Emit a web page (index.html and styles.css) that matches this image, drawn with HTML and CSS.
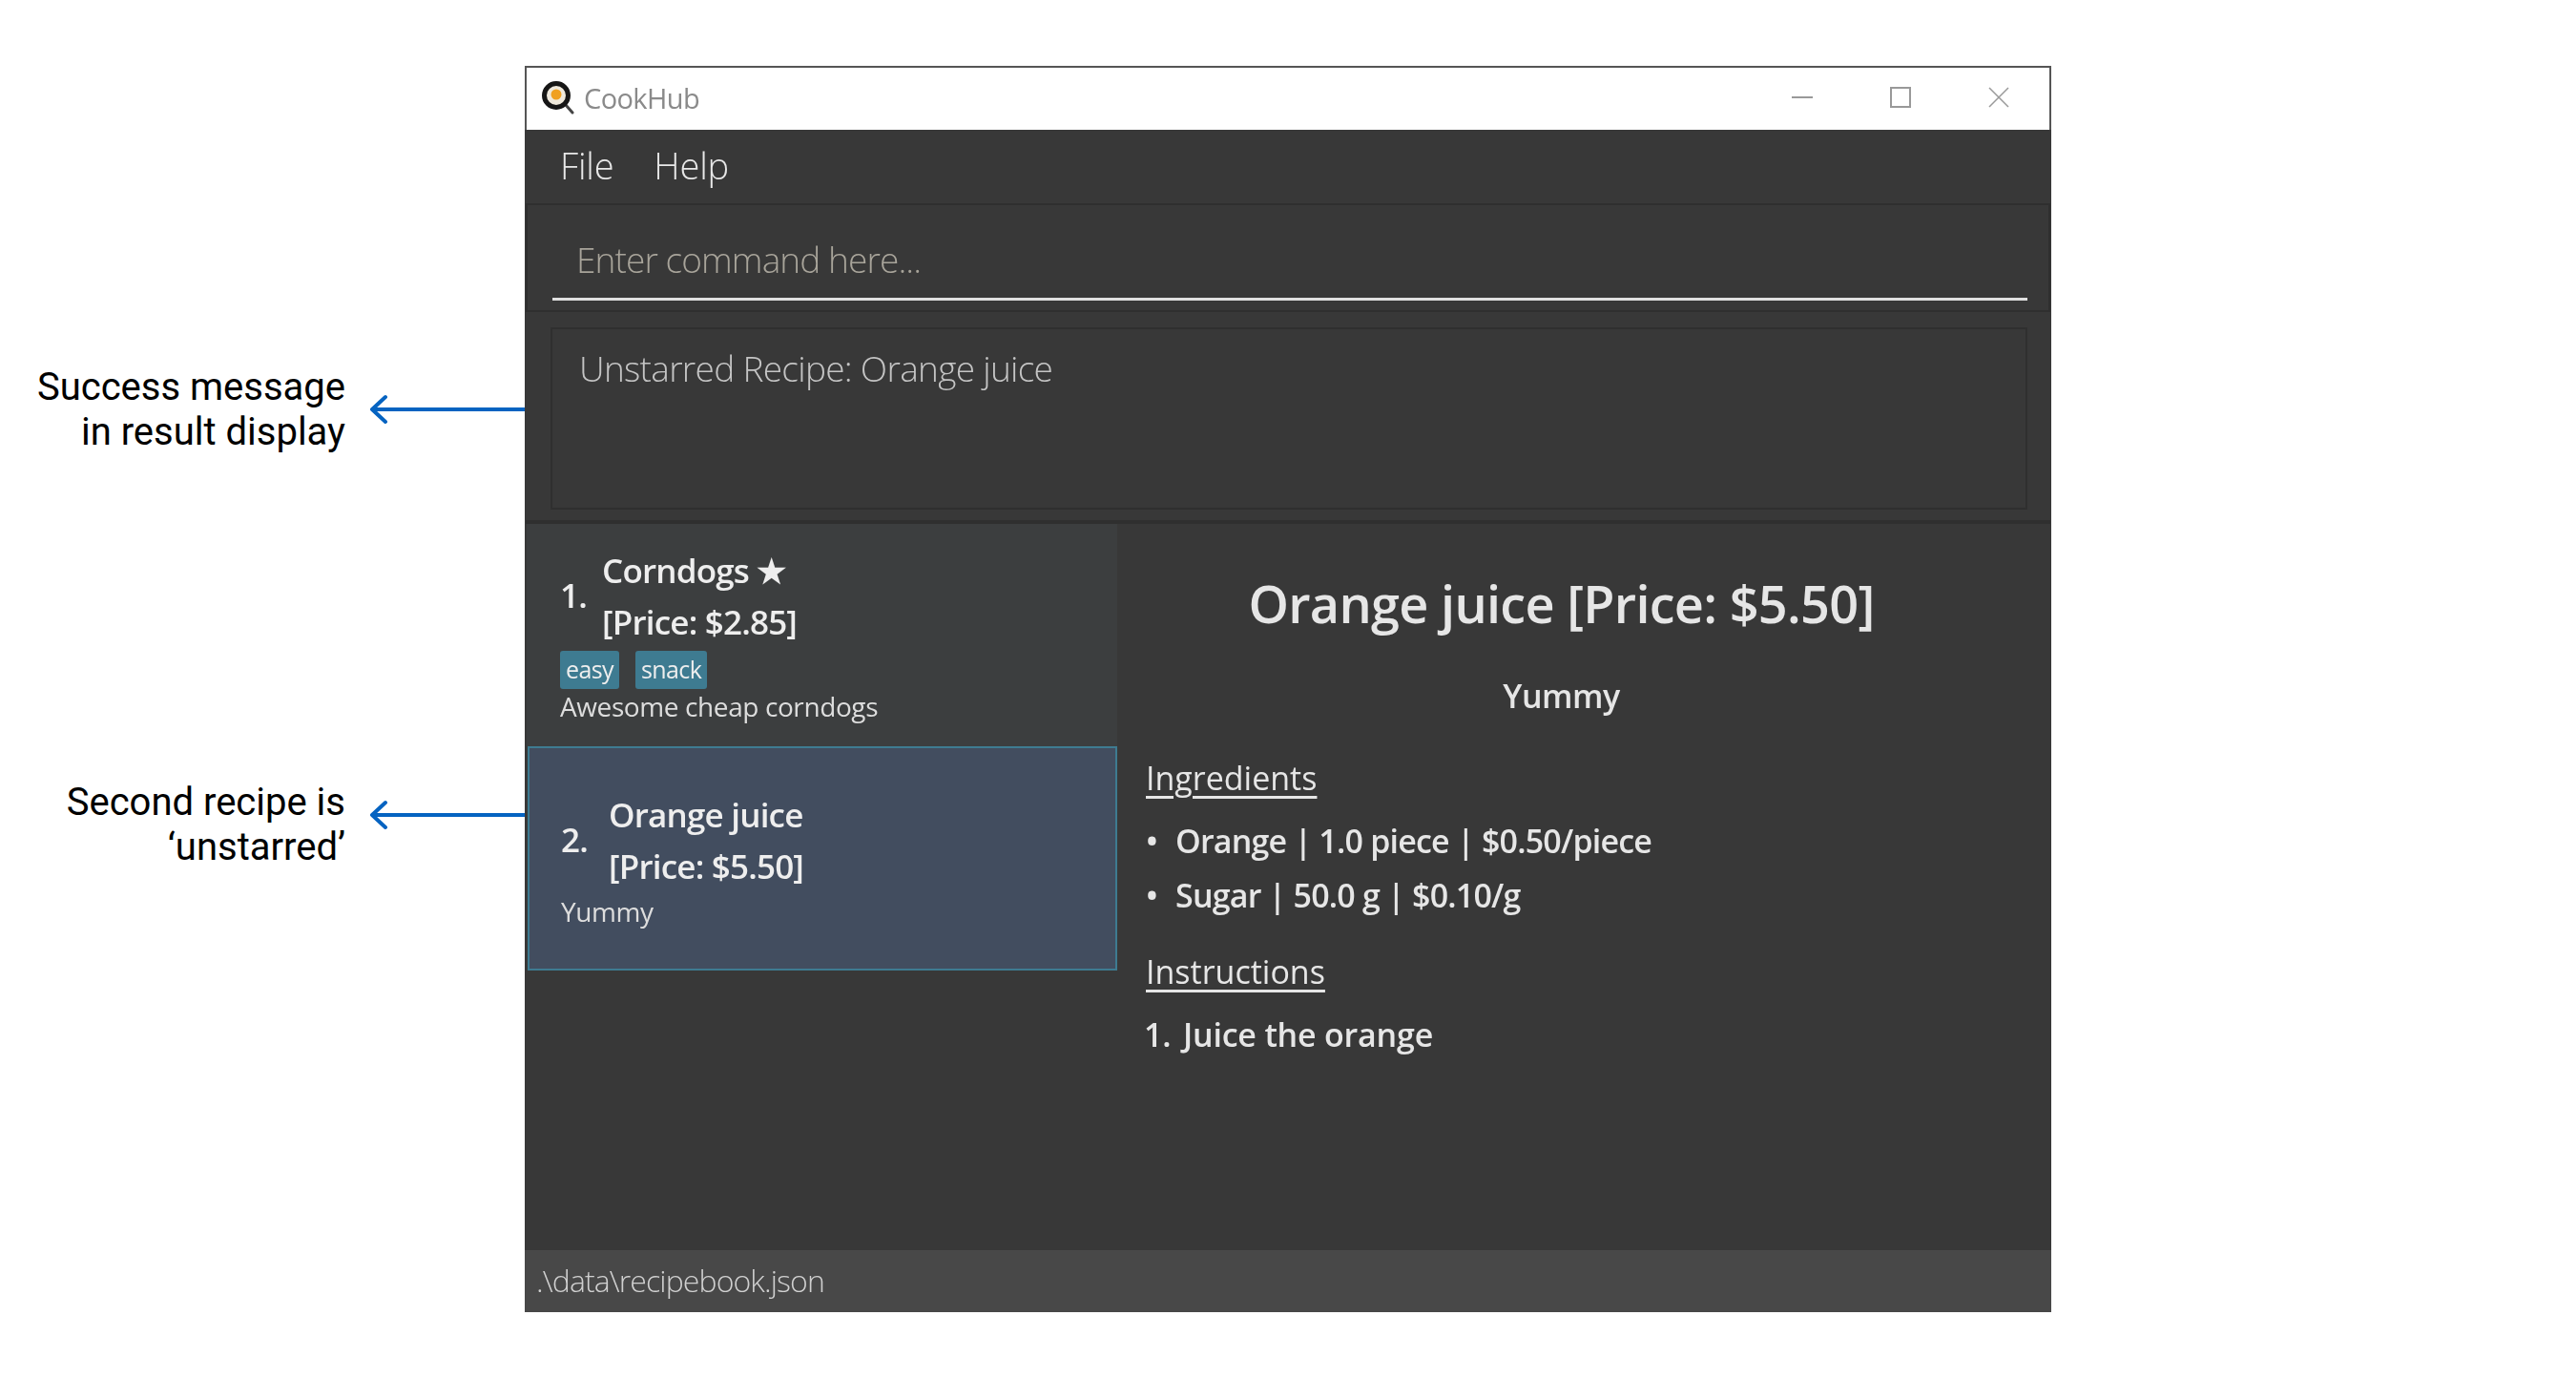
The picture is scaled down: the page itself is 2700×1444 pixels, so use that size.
FILE: index.html
```html
<!DOCTYPE html>
<html lang="en">
<head>
  <meta charset="UTF-8">
  <title>CookHub</title>
  <link rel="stylesheet" href="styles.css">
</head>
<body>
  <div class="stage">
    <div class="callout callout-result">
      <p class="callout-text">Success message<br>in result display</p>
      <svg class="arrow" width="164" height="32" viewBox="0 0 164 32"><path d="M164 16H4M18 3 4 16l14 13" fill="none" stroke="#0563c1" stroke-width="4" stroke-linecap="round" stroke-linejoin="round"/></svg>
    </div>
    <div class="callout callout-recipe">
      <p class="callout-text">Second recipe is<br>‘unstarred’</p>
      <svg class="arrow" width="164" height="32" viewBox="0 0 164 32"><path d="M164 16H4M18 3 4 16l14 13" fill="none" stroke="#0563c1" stroke-width="4" stroke-linecap="round" stroke-linejoin="round"/></svg>
    </div>

    <div class="window">
      <div class="titlebar">
        <svg class="app-icon" width="34" height="35" viewBox="0 0 34 35">
          <path d="M25 25l7 8" stroke="#444" stroke-width="3" stroke-linecap="round"/>
          <circle cx="15" cy="15" r="12.5" fill="#efe9dc" stroke="#161616" stroke-width="5"/>
          <circle cx="15" cy="14" r="5.5" fill="#f0a020"/>
        </svg>
        <span class="app-name">CookHub</span>
        <div class="win-controls">
          <svg width="22" height="22" viewBox="0 0 22 22"><path d="M0 11h22" stroke="#999" stroke-width="2"/></svg>
          <svg width="22" height="22" viewBox="0 0 22 22"><rect x="1" y="1" width="20" height="20" fill="none" stroke="#999" stroke-width="2"/></svg>
          <svg width="22" height="22" viewBox="0 0 22 22"><path d="M1 1l20 20M21 1 1 21" stroke="#999" stroke-width="1.5"/></svg>
        </div>
      </div>

      <div class="menubar">
        <span>File</span>
        <span>Help</span>
      </div>

      <div class="command-box">
        <div class="command-field">Enter command here...</div>
      </div>

      <div class="result-box">
        <div class="result-display">Unstarred Recipe: Orange juice</div>
      </div>

      <div class="main">
        <div class="recipe-list">
          <div class="card">
            <div class="card-head">
              <span class="card-index">1.</span>
              <div class="card-title">
                <div>Corndogs ★</div>
                <div>[Price: $2.85]</div>
              </div>
            </div>
            <div class="tags">
              <span class="tag">easy</span>
              <span class="tag">snack</span>
            </div>
            <div class="card-desc">Awesome cheap corndogs</div>
          </div>
          <div class="card card-selected">
            <div class="card-head">
              <span class="card-index">2.</span>
              <div class="card-title">
                <div>Orange juice</div>
                <div>[Price: $5.50]</div>
              </div>
            </div>
            <div class="card-desc">Yummy</div>
          </div>
        </div>

        <div class="detail">
          <h1 class="detail-name">Orange juice [Price: $5.50]</h1>
          <p class="detail-desc">Yummy</p>
          <h2 class="detail-head">Ingredients</h2>
          <div class="detail-row"><span class="bullet">•</span>Orange | 1.0 piece | $0.50/piece</div>
          <div class="detail-row"><span class="bullet">•</span>Sugar | 50.0 g | $0.10/g</div>
          <h2 class="detail-head detail-head-next">Instructions</h2>
          <div class="detail-row detail-step"><span class="step">1.</span>Juice the orange</div>
        </div>
      </div>

      <div class="statusbar">.\data\recipebook.json</div>
    </div>
  </div>
</body>
</html>
```

FILE: styles.css
```css
body { margin: 0; background: #fff; font-family: "Open Sans", "Noto Sans", sans-serif; }
.stage { position: relative; width: 2700px; height: 1444px; padding: 69px 0 0 550px; box-sizing: border-box; }

/* annotations on the left of the window */
.callout { position: absolute; left: 0; width: 550px; display: flex; align-items: center; justify-content: flex-end; gap: 24px; }
.callout-result { top: 382px; }
.callout-recipe { top: 817px; }
.callout-recipe .arrow { margin-bottom: 20px; }
.callout-text { margin: 0; font-family: Roboto, sans-serif; font-size: 40px; line-height: 47px; text-align: right; color: #000; }
.arrow { flex: none; }

.window { width: 1600px; height: 1306px; display: flex; flex-direction: column; background: #383838; filter: blur(0.5px); }

.titlebar { height: 67px; flex: none; box-sizing: border-box; display: flex; align-items: center; padding: 0 0 3px 16px; background: #fff; border: 2px solid #555; border-bottom: none; }
.app-icon { flex: none; }
.app-name { margin-left: 10px; font-size: 29px; letter-spacing: -0.6px; color: #8a8a8a; }
.win-controls { margin-left: auto; margin-right: 42px; display: flex; gap: 81px; }

.menubar { height: 77px; flex: none; box-sizing: border-box; display: flex; align-items: center; gap: 42px; padding: 0 0 3px 37px; font-size: 38px; font-weight: 300; letter-spacing: -0.2px; color: #e8e8e8; }

.command-box { height: 114px; flex: none; box-sizing: border-box; padding: 0 22px 10px 26px; margin: 0 1px; border: 2px solid #2f2f2f; }
.command-field { height: 100px; box-sizing: border-box; padding-left: 25px; line-height: 113px; font-size: 37px; font-weight: 300; letter-spacing: -0.9px; color: #a8a49a; border-bottom: 3px solid #e0e0e0; }

.result-box { height: 222px; flex: none; box-sizing: border-box; padding: 16px 24px 11px 26px; margin: 0 1px; border-bottom: 4px solid #2f2f2f; }
.result-display { height: 100%; box-sizing: border-box; padding: 15px 28px; font-size: 37px; font-weight: 300; letter-spacing: -0.7px; color: #c4c4c4; border: 2px solid #2f2f2f; }

.main { flex: 1; display: flex; min-height: 0; }
.recipe-list { width: 619px; flex: none; margin-left: 2px; }
.card { height: 233px; box-sizing: border-box; padding: 22px 35px 0; background: #3c3e3f; color: #eee; }
.card-selected { height: 235px; margin-left: 1px; padding: 43px 33px 0; background: #424d5f; border: 2px solid #3e7b91; }
.card-head { display: flex; align-items: center; gap: 16px; font-size: 35px; font-weight: 600; letter-spacing: -0.8px; }
.card-selected .card-head { gap: 22px; }
.card-index { padding-bottom: 3px; }
.card-title { line-height: 54px; }
.tags { display: flex; gap: 17px; margin-top: 3px; }
.tag { height: 40px; box-sizing: border-box; padding: 0 6px; line-height: 38px; font-size: 25px; letter-spacing: -0.6px; color: #eee; background: #3e7b91; border-radius: 3px; }
.card-desc { font-size: 28px; line-height: 36px; letter-spacing: -0.4px; color: #ddd; }
.card-selected .card-desc { margin-top: 2px; }

.detail { flex: 1; padding: 49px 0 0 30px; color: #e6e6e6; }
.detail-name { margin: 0; padding-right: 78px; text-align: center; font-size: 54px; font-weight: 600; line-height: 68px; letter-spacing: -0.7px; }
.detail-desc { margin: 40px 0 0; padding-right: 78px; text-align: center; font-size: 34px; font-weight: 600; line-height: 46px; letter-spacing: -0.5px; }
.detail-head { margin: 40px 0 15px; font-size: 34px; font-weight: 400; line-height: 46px; text-decoration: underline; text-underline-offset: 6px; }
.detail-head-next { margin-top: 28px; }
.detail-row { font-size: 34px; font-weight: 600; line-height: 57px; letter-spacing: -0.8px; display: flex; }
.detail-step { letter-spacing: -0.2px; }
.bullet { width: 31px; }
.step { width: 41px; margin-left: -2px; }

.statusbar { height: 65px; flex: none; box-sizing: border-box; padding-left: 12px; line-height: 64px; font-size: 32px; font-weight: 300; letter-spacing: -0.9px; color: #d0d0d0; background: #484848; }
```
